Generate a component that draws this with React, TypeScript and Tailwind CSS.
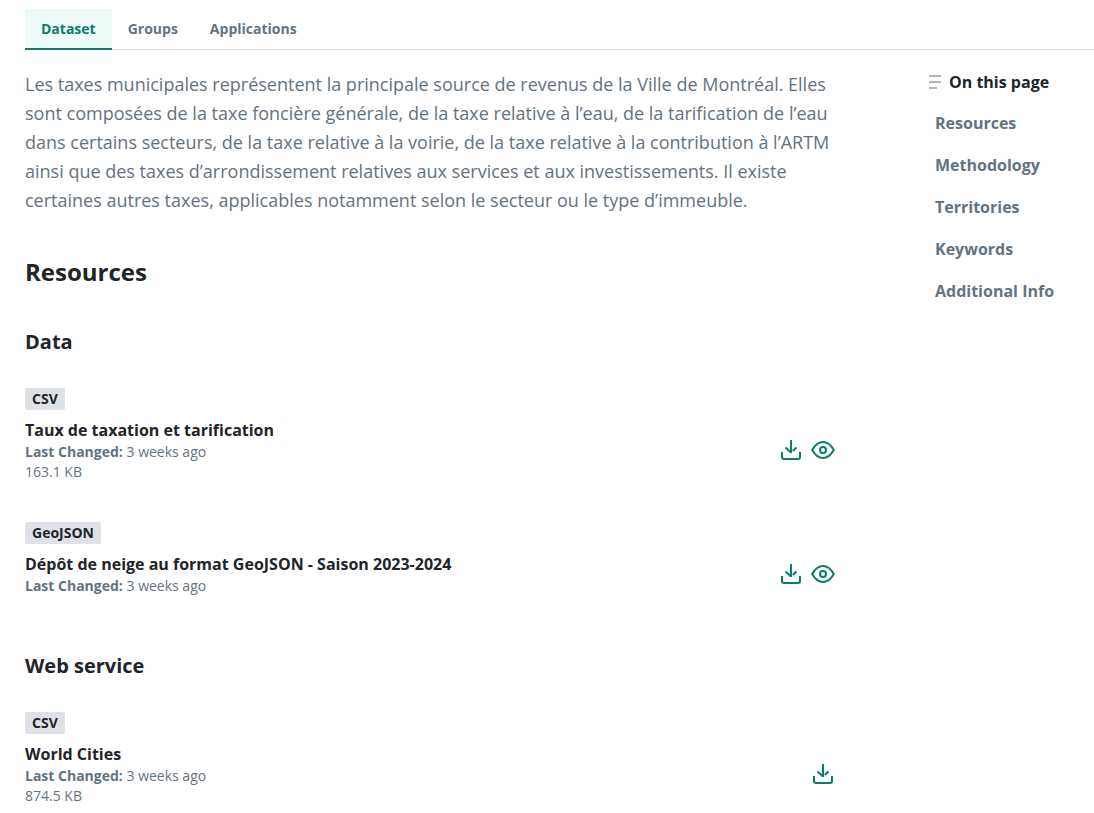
import React from "react";

function DownloadIcon() {
  return (
    <svg width="24" height="24" viewBox="0 0 24 24" fill="none" stroke="currentColor" strokeWidth="2" aria-hidden="true">
      <path d="M12 2v13M6.500 9.500l5.500 5M17.500 9.500l-3.700 3.400M3 14v5q0 2 2 2h14q2 0 2-2v-5" />
    </svg>
  );
}

function EyeIcon() {
  return (
    <svg width="24" height="24" viewBox="0 0 24 24" fill="none" stroke="currentColor" strokeWidth="2" strokeLinejoin="round" aria-hidden="true">
      <path d="M1.200 12C4 7 7.500 4 12 4s8 3 10.800 8C20 17 16.500 20 12 20s-8-3-10.800-8Z" />
      <circle cx="12" cy="12" r="3" />
    </svg>
  );
}

type ResourceProps = { format: string; title: string; size?: string; preview?: boolean };

function Resource({ format, title, size, preview }: ResourceProps) {
  return (
    <li className="flex items-center justify-between">
      <div>
        <span className="inline-block rounded-xs bg-[#dee2e6] px-[7px] text-sm leading-[22px] font-bold text-[#212529]">{format}</span>
        <h4 className="mt-2 text-base leading-6 font-bold text-[#212529]">{title}</h4>
        <p className="text-sm leading-5 text-[#637381]">
          <strong className="font-bold">Last Changed:</strong> 3 weeks ago
        </p>
        {size && <p className="text-sm leading-5 text-[#637381]">{size}</p>}
      </div>
      <div className="mt-8 flex gap-2 text-[#097d6c]">
        <a href="#download" aria-label={`Download ${title}`}><DownloadIcon /></a>
        {preview && <a href="#preview" aria-label={`Preview ${title}`}><EyeIcon /></a>}
      </div>
    </li>
  );
}

const sections = ["Resources", "Methodology", "Territories", "Keywords", "Additional Info"];

export default function App() {
  return (
    <div className="bg-white pt-[9px] pb-2 pl-[25px] font-['Open_Sans',sans-serif] text-[#212529]">
      <nav className="flex border-b border-[#dee2e6] text-sm leading-5 font-bold text-[#637381]">
        <a href="#dataset" className="-mb-px border-b-2 border-[#097d6c] bg-[#edfaf7] px-4 pt-2.5 pb-[9px] text-[#097d6c]">Dataset</a>
        <a href="#groups" className="px-4 py-2.5">Groups</a>
        <a href="#applications" className="px-4 py-2.5">Applications</a>
      </nav>
      <div className="flex justify-between pt-5">
        <main className="max-w-[810px] flex-1">
          <p className="text-lg leading-[29px] text-[#637381]">
            Les taxes municipales représentent la principale source de revenus de la Ville de Montréal. Elles sont composées de la taxe foncière générale, de la taxe relative à l’eau, de la tarification de l’eau dans certains secteurs, de la taxe relative à la voirie, de la taxe relative à la contribution à l’ARTM ainsi que des taxes d’arrondissement relatives aux services et aux investissements. Il existe certaines autres taxes, applicables notamment selon le secteur ou le type d’immeuble.
          </p>
          <h2 id="resources" className="mt-[41px] text-2xl leading-8 font-bold">Resources</h2>
          <h3 className="mt-10 text-xl leading-7 font-bold">Data</h3>
          <ul className="mt-[30px] space-y-[38px]">
            <Resource format="CSV" title="Taux de taxation et tarification" size="163.1 KB" preview />
            <Resource format="GeoJSON" title="Dépôt de neige au format GeoJSON - Saison 2023-2024" preview />
          </ul>
          <h3 className="mt-14 text-xl leading-7 font-bold">Web service</h3>
          <ul className="mt-[30px]">
            <Resource format="CSV" title="World Cities" size="874.5 KB" />
          </ul>
        </main>
        <aside className="w-[166px] shrink-0">
          <h2 className="flex items-center gap-2 text-base leading-6 font-bold">
            <svg width="13" height="14" viewBox="0 0 13 14" fill="none" stroke="#b3b3c2" strokeWidth="2" aria-hidden="true">
              <path d="M1 1h12M1 7h12M1 13h8" />
            </svg>
            On this page
          </h2>
          <ul className="mt-[17px] space-y-[18px] pl-[7px] text-base leading-6 font-bold text-[#637381]">
            {sections.map((name) => (
              <li key={name}><a href="#resources">{name}</a></li>
            ))}
          </ul>
        </aside>
      </div>
    </div>
  );
}
